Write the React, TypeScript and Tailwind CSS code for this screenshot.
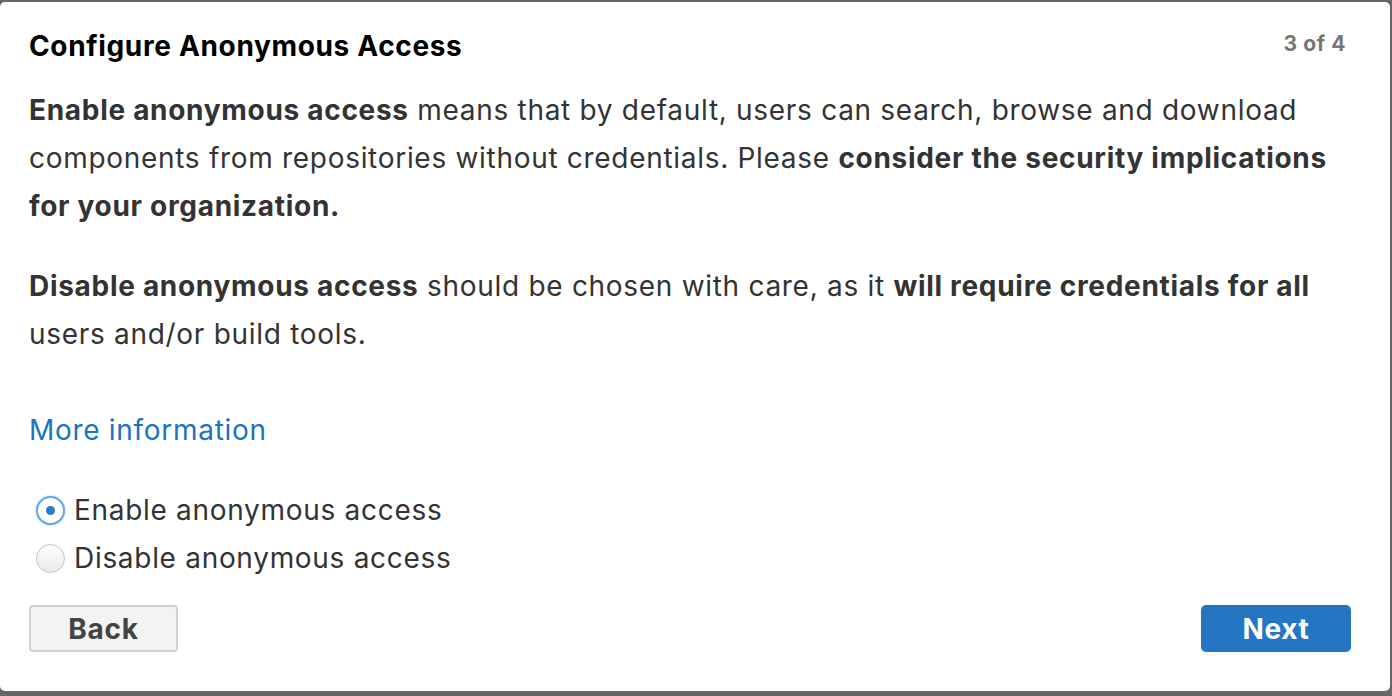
import React from "react";

export default function App() {
  const font = { fontFamily: '"Inter", "Noto Sans", sans-serif' };
  return (
    <div className="w-[1392px] h-[696px] bg-[#666666] pt-[2px] pr-[2px] pb-[5px] tracking-[0.7px]" style={font}>
      <div className="h-full bg-white rounded-[5px] px-[29px] pt-[22px] flex flex-col text-[#333333]">
        <div className="flex items-start justify-between">
          <h1 className="text-[28px] leading-[44px] font-bold text-black tracking-[0.65px]">Configure Anonymous Access</h1>
          <span className="text-[21px] leading-[40px] font-bold text-[#777777] mr-[15px] tracking-[0.6px]">3 of 4</span>
        </div>
        <p className="text-[28px] leading-[48px] mt-[18px] whitespace-nowrap">
          <b>Enable anonymous access</b> means that by default, users can search, browse and download
          <br />
          components from repositories without credentials. Please <b>consider the security implications</b>
          <br />
          <b>for your organization.</b>
        </p>
        <p className="text-[28px] leading-[48px] mt-[32px] whitespace-nowrap">
          <b>Disable anonymous access</b> should be chosen with care, as it <b>will require credentials for all</b>
          <br />
          users and/or build tools.
        </p>
        <a className="text-[28px] leading-[48px] mt-[48px] text-[#1a73c4] self-start">More information</a>
        <div className="mt-[32px] flex flex-col">
          <label className="flex items-center text-[28px] leading-[48px]">
            <span className="w-[29px] h-[29px] rounded-full border-2 border-[#6aa9e6] bg-white flex items-center justify-center ml-[7px] mr-[9px] shadow-[0_0_2px_#8bbcec]">
              <span className="w-[9px] h-[9px] rounded-full bg-[#2a7bd0]" />
            </span>
            Enable anonymous access
          </label>
          <label className="flex items-center text-[28px] leading-[48px]">
            <span className="w-[29px] h-[29px] rounded-full border border-[#c4c4c4] bg-gradient-to-b from-[#ffffff] to-[#e8e8e8] ml-[7px] mr-[9px]" />
            Disable anonymous access
          </label>
        </div>
        <div className="flex justify-between mt-[23px]">
          <button className="w-[149px] h-[47px] rounded-[4px] border-2 border-[#d0d0d0] bg-[#f3f3f3] text-[28px] font-bold text-[#444444]">Back</button>
          <button className="w-[150px] h-[47px] rounded-[5px] bg-[#2476c3] text-[28px] font-bold text-white mr-[10px]">Next</button>
        </div>
      </div>
    </div>
  );
}
